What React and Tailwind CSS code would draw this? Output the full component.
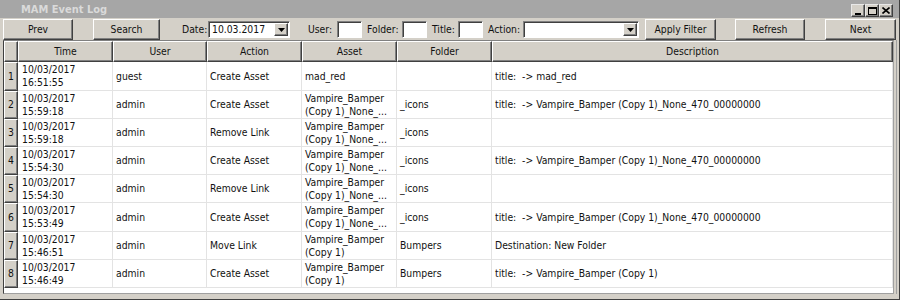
import React from "react";

const raised =
  "border border-t-white border-l-white border-r-[#404040] border-b-[#404040] shadow-[inset_-1px_-1px_0_#808080]";
const sunken =
  "border border-t-[#808080] border-l-[#808080] border-r-white border-b-white shadow-[inset_1px_1px_0_#404040] bg-white";

const cols = [
  { name: "Time", w: "w-[95px]", pl: "pl-[4px]" },
  { name: "User", w: "w-[94px]", pl: "pl-[3px]" },
  { name: "Action", w: "w-[95px]", pl: "pl-[3px]" },
  { name: "Asset", w: "w-[95px]", pl: "pl-[3px]" },
  { name: "Folder", w: "w-[95px]", pl: "pl-[3px]" },
  { name: "Description", w: "w-[401px]", pl: "pl-[3px]" },
];

const V1 = ["Vampire_Bamper", "(Copy 1)_None_..."];
const V2 = ["Vampire_Bamper", "(Copy 1)"];
const D = "title:  -> Vampire_Bamper (Copy 1)_None_470_00000000";

const rows = [
  { h: "h-[29px]", c: [["10/03/2017", "16:51:55"], "guest", "Create Asset", "mad_red", "", "title:  -> mad_red"] },
  { h: "h-[28px]", c: [["10/03/2017", "15:59:18"], "admin", "Create Asset", V1, "_icons", D] },
  { h: "h-[28px]", c: [["10/03/2017", "15:59:18"], "admin", "Remove Link", V1, "_icons", ""] },
  { h: "h-[28px]", c: [["10/03/2017", "15:54:30"], "admin", "Create Asset", V1, "_icons", D] },
  { h: "h-[28px]", c: [["10/03/2017", "15:54:30"], "admin", "Remove Link", V1, "_icons", ""] },
  { h: "h-[29px]", c: [["10/03/2017", "15:53:49"], "admin", "Create Asset", V1, "_icons", D] },
  { h: "h-[28px]", c: [["10/03/2017", "15:46:51"], "admin", "Move Link", V2, "Bumpers", "Destination: New Folder"] },
  { h: "h-[28px]", c: [["10/03/2017", "15:46:49"], "admin", "Create Asset", V2, "Bumpers", "title:  -> Vampire_Bamper (Copy 1)"] },
];

function Btn({ w, ml, children }) {
  return (
    <div className={`${raised} ${w} ${ml} h-[21px] bg-[#d4d0c8] flex items-center justify-center`}>
      {children}
    </div>
  );
}

function DropArrow() {
  return (
    <div className={`${raised} w-[14px] h-[13px] bg-[#d4d0c8] flex items-center justify-center mr-[1px]`}>
      <svg width="7" height="4" viewBox="0 0 7 4">
        <polygon points="0,0 7,0 3.5,4" fill="#000" />
      </svg>
    </div>
  );
}

function TitleBtn({ children }) {
  return (
    <div className="w-[14px] h-[13px] bg-[#d4d0c8] border border-t-[#e8e8e8] border-l-[#e8e8e8] border-r-[#404040] border-b-[#404040] shadow-[inset_-1px_-1px_0_#808080] flex items-center justify-center">
      {children}
    </div>
  );
}

function Cell({ v, w, pl }) {
  const lines = Array.isArray(v) ? v : [v];
  return (
    <div className={`${w} ${pl} shrink-0 h-full border-r border-b border-[#e3e3e3] flex flex-col justify-center leading-[13px] whitespace-pre overflow-hidden`}>
      {lines.map((l, i) => (
        <div key={i}>{l}</div>
      ))}
    </div>
  );
}

export default function App() {
  return (
    <div className="w-[900px] h-[300px] bg-[#d4d0c8] flex flex-col overflow-hidden font-['DejaVu_Sans_Condensed','Liberation_Sans',sans-serif] text-[10.3px] text-[#111] relative">
      {/* title bar */}
      <div className="h-[18px] bg-[#a6a6a6] flex items-start pl-[21px] pr-[7px] shrink-0">
        <span className="font-bold text-[#dadada] text-[11px] leading-[18px] mt-[1px]">MAM Event Log</span>
        <div className="ml-auto flex mt-[4px]">
          <TitleBtn>
            <div className="w-[6px] h-[2px] bg-black mt-[6px]" />
          </TitleBtn>
          <TitleBtn>
            <div className="w-[9px] h-[8px] border border-black border-t-2" />
          </TitleBtn>
          <TitleBtn>
            <svg width="8" height="7" viewBox="0 0 8 7">
              <path d="M0.5 0.5 L7.5 6.5 M7.5 0.5 L0.5 6.5" stroke="#000" strokeWidth="1.6" />
            </svg>
          </TitleBtn>
        </div>
      </div>

      {/* toolbar */}
      <div className="h-[22px] shrink-0 flex items-start pt-[1px] pl-[3px]">
        <Btn w="w-[70px]" ml="">Prev</Btn>
        <Btn w="w-[67px]" ml="ml-[20px]">Search</Btn>
        <div className="ml-[22px] w-[26px] h-[21px] flex items-center">Date:</div>
        <div className={`${sunken} w-[82px] h-[17px] mt-[2px] flex items-center pl-[3px]`}>
          <span className="flex-1">10.03.2017</span>
          <DropArrow />
        </div>
        <div className="ml-[18px] w-[29px] h-[21px] flex items-center">User:</div>
        <div className={`${sunken} w-[25px] h-[17px] mt-[2px]`} />
        <div className="ml-[5px] w-[35px] h-[21px] flex items-center">Folder:</div>
        <div className={`${sunken} w-[25px] h-[17px] mt-[2px]`} />
        <div className="ml-[5px] w-[26px] h-[21px] flex items-center">Title:</div>
        <div className={`${sunken} w-[25px] h-[17px] mt-[2px]`} />
        <div className="ml-[5px] w-[35px] h-[21px] flex items-center">Action:</div>
        <div className={`${sunken} w-[116px] h-[17px] mt-[2px] flex items-center justify-end`}>
          <DropArrow />
        </div>
        <Btn w="w-[71px]" ml="ml-[6px]">Apply Filter</Btn>
        <Btn w="w-[70px]" ml="ml-[19px]">Refresh</Btn>
        <Btn w="w-[71px]" ml="ml-[20px]">Next</Btn>
      </div>

      {/* table */}
      <div className="ml-[3px] w-[891px] h-[254px] shrink-0 bg-white border border-t-[#808080] border-l-[#404040] border-r-[#a0a0a0] border-b-[#a0a0a0] flex flex-col overflow-hidden">
        <div className="h-[21px] shrink-0 flex bg-[#d4d0c8]">
          <div className={`${raised} w-[14px] h-full shrink-0`} />
          {cols.map((c) => (
            <div key={c.name} className={`${raised} ${c.w} h-full shrink-0 flex items-center justify-center`}>
              {c.name}
            </div>
          ))}
        </div>
        {rows.map((r, i) => (
          <div key={i} className={`${r.h} shrink-0 flex`}>
            <div className={`${raised} w-[14px] h-full shrink-0 bg-[#d4d0c8] flex items-center justify-center`}>
              {i + 1}
            </div>
            {r.c.map((v, j) => (
              <Cell key={j} v={v} w={cols[j].w} pl={cols[j].pl} />
            ))}
          </div>
        ))}
      </div>

      {/* window frame lines */}
      <div className="absolute right-[3px] top-[40px] bottom-[6px] w-px bg-[#a0a0a0]" />
      <div className="absolute left-0 right-0 bottom-0 h-px bg-[#404040]" />
      <div className="absolute right-0 top-0 bottom-0 w-px bg-[#404040]" />
    </div>
  );
}
